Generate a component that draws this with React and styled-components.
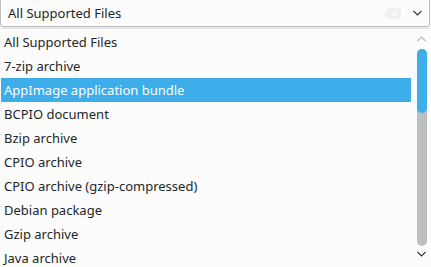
import React from "react";
import styled, { createGlobalStyle } from "styled-components";

const Global = createGlobalStyle`
  html, body { margin: 0; padding: 0; background: #eff0f1; }
  body { width: 431px; height: 267px; overflow: hidden; font-family: "Noto Sans", sans-serif; }
`;

const Page = styled.div`
  width: 431px;
  height: 267px;
  display: flex;
  flex-direction: column;
  background: #fcfcfc;
  overflow: hidden;
`;

const Combo = styled.div`
  height: 26px;
  margin: -2px 1px 0 0;
  border: 1px solid #bcbebf;
  border-radius: 0 0 3px 3px;
  background: #fcfcfc;
  display: flex;
  align-items: center;
  padding: 1px 6px 0 7px;
  box-shadow: 0 1px 1px rgba(0,0,0,0.08);
  box-sizing: content-box;
`;

const ComboText = styled.div`
  flex: 1;
  font-size: 13px;
  color: #232627;
`;

const ClearIcon = styled.svg`
  width: 17px;
  height: 11px;
  margin-right: 12px;
`;

const Chevron = styled.svg`
  width: 9px;
  height: 6px;
  margin-right: 1px;
`;

const Popup = styled.div`
  flex: 1;
  margin-top: 1px;
  border-top: 1px solid #e3e4e5;
  display: flex;
  background: #fcfcfc;
  min-height: 0;
`;

const List = styled.div`
  flex: 1;
  padding: 1px 0 0 1px;
  display: flex;
  flex-direction: column;
`;

const Item = styled.div`
  height: 24px;
  flex: none;
  display: flex;
  align-items: center;
  padding-left: 3px;
  font-size: 13px;
  color: ${p => (p.$selected ? "#fcfcfc" : "#232627")};
  background: ${p => (p.$selected ? "#3daee9" : "transparent")};
`;

const ScrollBar = styled.div`
  width: 20px;
  flex: none;
  display: flex;
  flex-direction: column;
  align-items: center;
  padding: 7px 0 0 0;
`;

const Arrow = styled.svg`
  width: 9px;
  height: 6px;
  flex: none;
`;

const Track = styled.div`
  width: 10px;
  height: 197px;
  margin: 7px 0 5px 2px;
  background: #bdbec0;
  border-radius: 5px;
  display: flex;
  flex-direction: column;
`;

const Thumb = styled.div`
  height: 64px;
  background: #3daee9;
  border-radius: 5px;
`;

const items = [
  "All Supported Files",
  "7-zip archive",
  "AppImage application bundle",
  "BCPIO document",
  "Bzip archive",
  "CPIO archive",
  "CPIO archive (gzip-compressed)",
  "Debian package",
  "Gzip archive",
  "Java archive",
];

export default function App() {
  return (
    <>
      <Global />
      <Page>
        <Combo>
          <ComboText>All Supported Files</ComboText>
          <ClearIcon viewBox="0 0 17 11">
            <path d="M5 0 H17 V11 H5 L0 5.5 Z" fill="#f0f1f1" />
            <path d="M8.5 3 L12.5 8 M12.5 3 L8.5 8" stroke="#fcfcfc" strokeWidth="1.6" />
          </ClearIcon>
          <Chevron viewBox="0 0 9 6">
            <path d="M0.5 1 L4.5 5 L8.5 1" fill="none" stroke="#31363b" strokeWidth="1.1" />
          </Chevron>
        </Combo>
        <Popup>
          <List>
            {items.map((t, i) => (
              <Item key={t} $selected={i === 2}>{t}</Item>
            ))}
          </List>
          <ScrollBar>
            <Arrow viewBox="0 0 9 6">
              <path d="M0.5 5 L4.5 1 L8.5 5" fill="none" stroke="#b5b7b9" strokeWidth="1.1" />
            </Arrow>
            <Track>
              <Thumb />
            </Track>
            <Arrow viewBox="0 0 9 6">
              <path d="M0.5 1 L4.5 5 L8.5 1" fill="none" stroke="#31363b" strokeWidth="1.1" />
            </Arrow>
          </ScrollBar>
        </Popup>
      </Page>
    </>
  );
}
